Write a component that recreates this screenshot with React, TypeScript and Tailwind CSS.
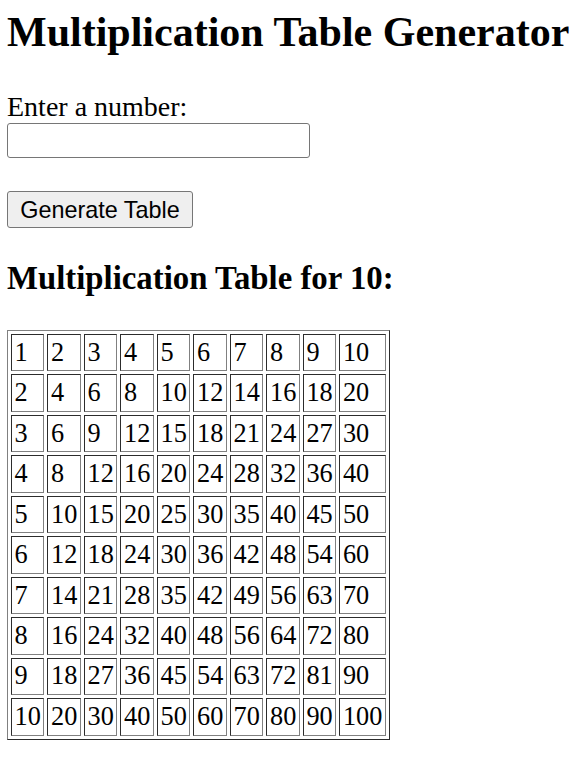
import React from "react";

export default function App() {
  const n = 10;
  const rows = Array.from({ length: 10 }, (_, i) => i + 1);
  const cols = Array.from({ length: 10 }, (_, j) => j + 1);
  return (
    <div className="px-[7px] text-black bg-white min-h-[759px] font-['Liberation_Serif','Times_New_Roman',serif]">
      <h1 className="pt-[8px] text-[42px] font-bold leading-[48px] whitespace-nowrap">
        Multiplication Table Generator
      </h1>
      <div className="mt-[37px] text-[28px] leading-[28px]">
        <label htmlFor="num">Enter a number:</label>
      </div>
      <input
        id="num"
        type="number"
        className="mt-[2px] block w-[303px] h-[35px] border border-[#767676] rounded-[3px] bg-white px-[3px] text-[18px] font-['Liberation_Sans',Arial,sans-serif]"
      />
      <button
        type="button"
        className="mt-[33px] block w-[186px] h-[37px] border border-[#767676] rounded-[3px] bg-[#efefef] text-[23.4px] leading-[26px] text-black font-['Liberation_Sans',Arial,sans-serif]"
      >
        Generate Table
      </button>
      <h2 className="mt-[32px] text-[32.8px] font-bold leading-[37px] whitespace-nowrap">
        Multiplication Table for {n}:
      </h2>
      <table className="mt-[33px] border-separate border-spacing-[3px] border border-[gray] [border-style:outset] text-[26.3px] leading-[30.3px]">
        <tbody>
          {rows.map((r) => (
            <tr key={r}>
              {cols.map((c) => (
                <td
                  key={c}
                  className="border border-[gray] [border-style:inset] p-[2.6px] text-left align-middle"
                >
                  {r * c}
                </td>
              ))}
            </tr>
          ))}
        </tbody>
      </table>
    </div>
  );
}
